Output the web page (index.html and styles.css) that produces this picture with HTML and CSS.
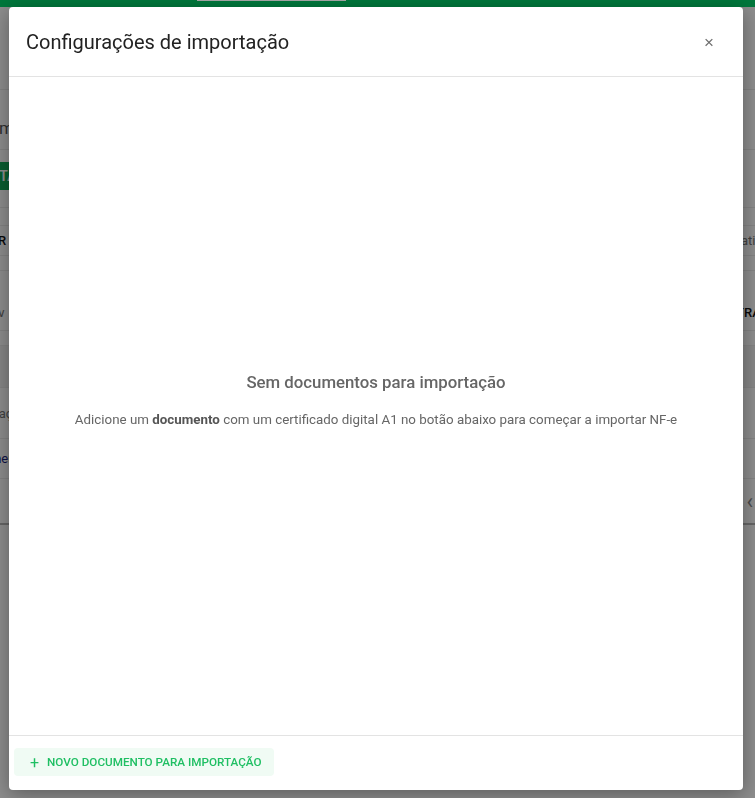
FILE: index.html
```html
<!DOCTYPE html>
<html lang="pt-BR">
<head>
    <meta charset="UTF-8">
    <meta name="viewport" content="width=device-width, initial-scale=1.0">
    <title>Importação de NF-e</title>
    <link rel="stylesheet" href="styles.css">
</head>
<body>
    <div class="app">
        <div class="topbar"><span class="tab"></span></div>
        <div class="row row-head"></div>
        <div class="row row-title"><span class="cut">Documentos</span></div>
        <div class="row row-actions"><button class="btn-green">IMPORTAR</button></div>
        <div class="row row-gap gap-first"></div>
        <div class="row row-filter">
            <span class="cut dark">LIMPAR</span>
            <span class="right muted">Ativo / inativo</span>
        </div>
        <div class="row row-gap"></div>
        <div class="row row-select">
            <span class="chev muted">&#8744;</span>
            <span class="right dark">FILTRAR</span>
        </div>
        <div class="row row-gap"></div>
        <div class="row row-band"></div>
        <div class="row row-item"><span class="cut muted">Importação pendente</span></div>
        <div class="row row-item"><span class="cut blue">Documento</span></div>
        <div class="row row-pager"><span class="right pager">&lsaquo;</span></div>
    </div>

    <div class="overlay"></div>

    <div class="modal">
        <div class="modal-header">
            <h2>Configurações de importação</h2>
            <button class="close">&times;</button>
        </div>
        <div class="modal-body">
            <h3>Sem documentos para importação</h3>
            <p>Adicione um <b>documento</b> com um certificado digital A1 no botão abaixo para começar a importar NF-e</p>
        </div>
        <div class="modal-footer">
            <button class="btn-new"><span class="plus">+</span>NOVO DOCUMENTO PARA IMPORTAÇÃO</button>
        </div>
    </div>
</body>
</html>
```

FILE: styles.css
```css
* {
    margin: 0;
    padding: 0;
    box-sizing: border-box;
}

body {
    width: 100%;
    height: 100vh;
    overflow: hidden;
    font-family: Roboto, "Noto Sans", Arial, sans-serif;
    background: #fff;
}

/* page behind the dialog */
.app {
    display: flex;
    flex-direction: column;
}
.topbar {
    height: 7px;
    background: #00783c;
    position: relative;
    z-index: 20;
}
.topbar .tab {
    display: block;
    margin-left: 197px;
    width: 149px;
    height: 1px;
    background: #a9a9a9;
}
.row {
    display: flex;
    align-items: center;
    border-bottom: 1px solid #ececec;
    font-size: 13px;
    white-space: nowrap;
}
.row-head { height: 83px; }
.row-title { height: 60px; padding-top: 16px; font-size: 17px; color: #555; }
.row-actions { height: 58px; padding-bottom: 6px; }
.row-gap { height: 15px; }
.gap-first { height: 18px; }
.row-filter { height: 30px; }
.row-select { height: 60px; align-items: flex-end; padding-bottom: 10px; }
.row-band { height: 42px; background: #f3f3f3; }
.row-item { height: 51px; }
.row-item + .row-item { height: 40px; }
.row-pager { height: 46px; border-bottom: 2px solid #b8b8b8; }

.cut { margin-left: -40px; }
.chev { margin-left: -3px; font-size: 12px; }
.right { margin-left: auto; margin-right: -14px; }
.dark { color: #111; font-weight: 500; }
.muted { color: #777; }
.blue { color: #1a237e; }
.pager { margin-right: 0; padding-right: 2px; font-size: 22px; color: #888; }

.btn-green {
    margin-left: -56px;
    height: 28px;
    padding: 0 12px;
    border: none;
    border-radius: 3px;
    background: #0fa958;
    color: #fff;
    font: 600 14px Roboto, sans-serif;
}

.overlay {
    position: fixed;
    inset: 7px 0 0 0;
    background: rgba(0, 0, 0, 0.45);
    z-index: 10;
}

/* dialog */
.modal {
    position: fixed;
    left: 9px;
    top: 7px;
    width: 734px;
    height: 783px;
    background: #fff;
    border-radius: 4px;
    box-shadow: 0 4px 20px rgba(0, 0, 0, 0.35);
    z-index: 30;
    display: flex;
    flex-direction: column;
}
.modal-header {
    height: 70px;
    padding: 0 29px 0 17px;
    display: flex;
    align-items: center;
    justify-content: space-between;
    border-bottom: 1px solid #e3e3e3;
}
.modal-header h2 {
    font-size: 20px;
    font-weight: 400;
    color: #222;
}
.close {
    border: none;
    background: transparent;
    color: #6f6f6f;
    font-size: 17px;
    font-weight: 300;
    margin-top: 2px;
    cursor: pointer;
}
.modal-body {
    flex: 1;
    display: flex;
    flex-direction: column;
    align-items: center;
    justify-content: center;
    padding-bottom: 14px;
    color: #666;
    text-align: center;
}
.modal-body h3 {
    font-size: 16.8px;
    font-weight: 500;
    margin-bottom: 20px;
}
.modal-body p {
    font-size: 13.35px;
}
.modal-body b {
    font-weight: 700;
    color: #555;
}
.modal-footer {
    height: 55px;
    padding: 12px 5px;
    border-top: 1px solid #e3e3e3;
    display: flex;
    align-items: flex-start;
}
.btn-new {
    height: 28px;
    padding: 0 12px 0 16px;
    border: none;
    border-radius: 4px;
    background: #f0fbf4;
    color: #1fbf63;
    font: 500 11.7px Roboto, sans-serif;
    display: flex;
    align-items: center;
    gap: 8px;
    cursor: pointer;
}
.btn-new .plus {
    font-size: 16px;
    font-weight: 400;
}
```
